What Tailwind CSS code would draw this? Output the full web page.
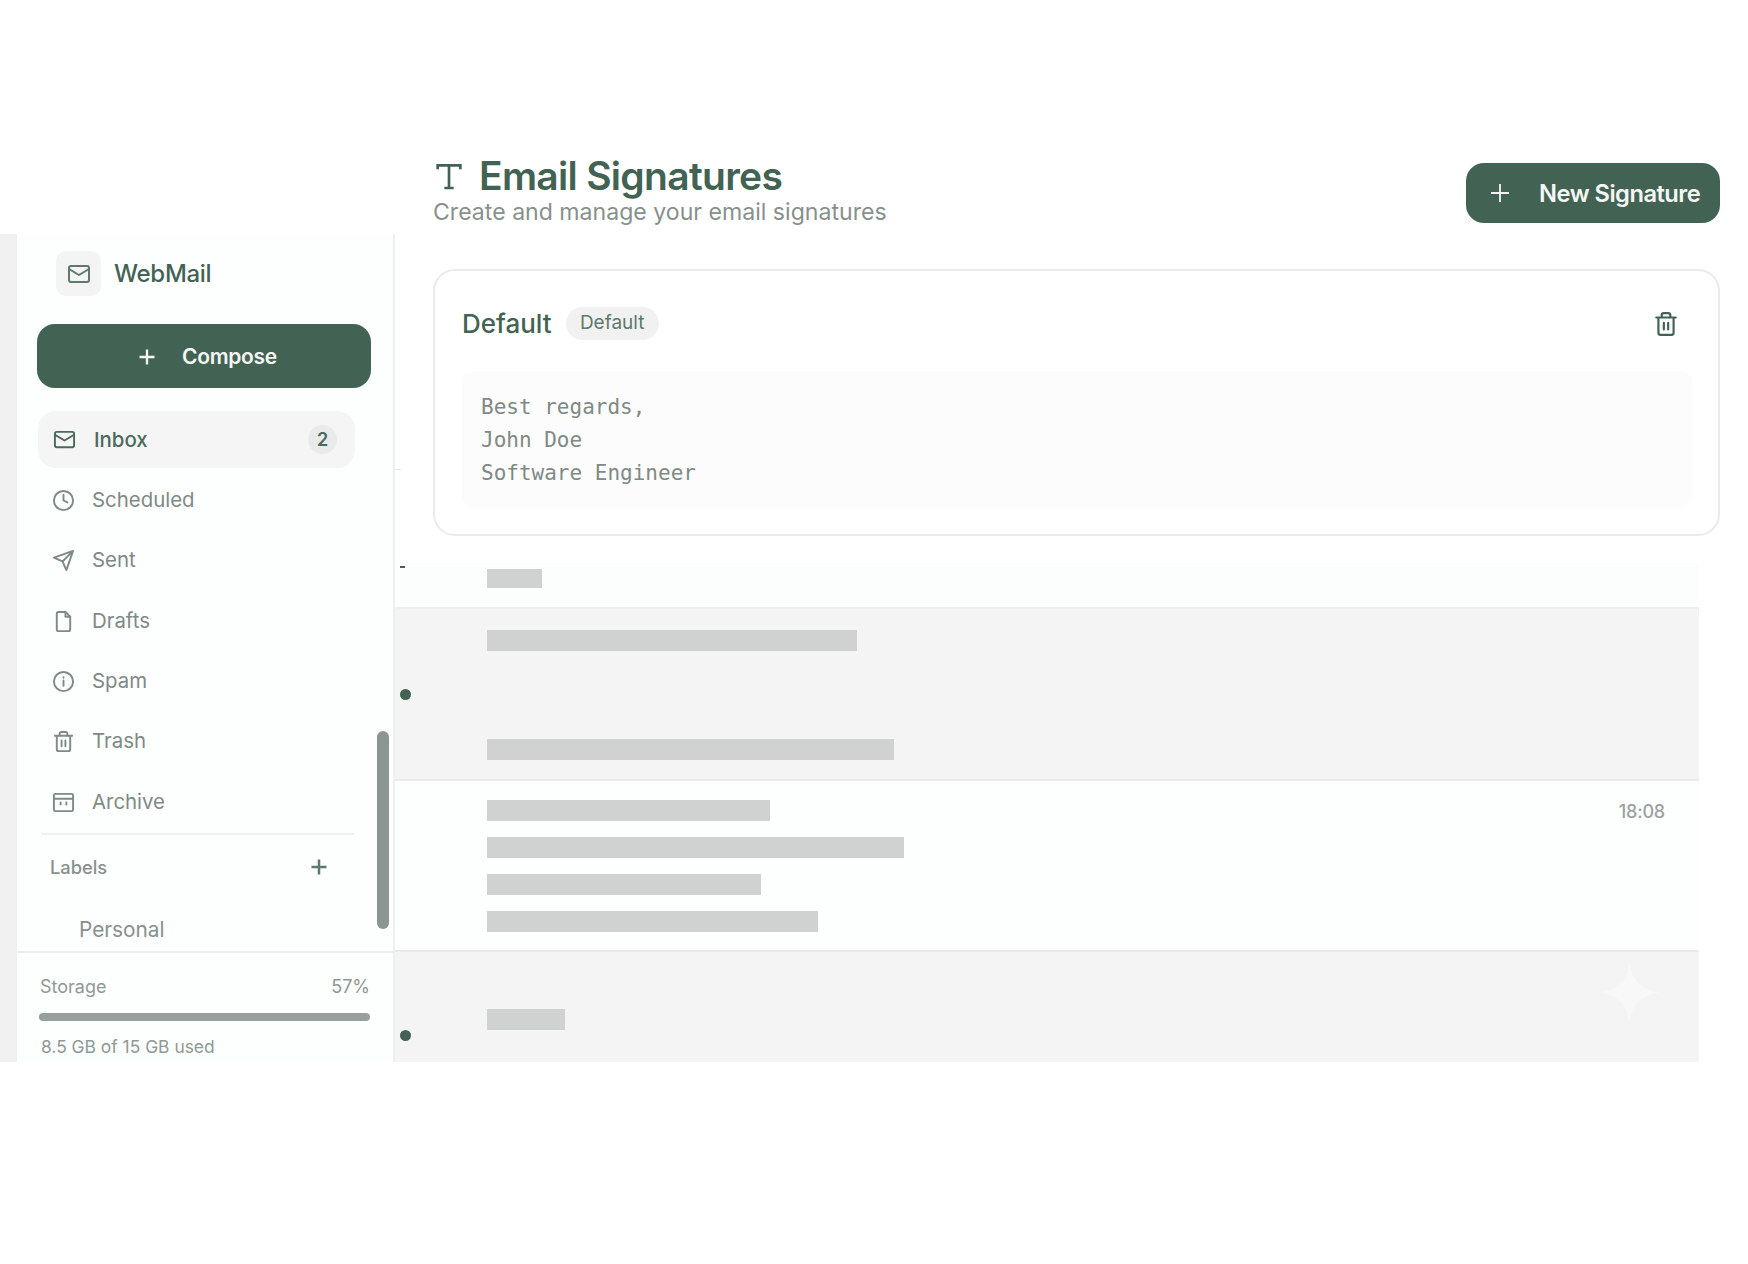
<!DOCTYPE html>
<html lang="en">
<head>
    <meta charset="UTF-8">
    <title>Email Signatures</title>
    <script src="https://cdn.jsdelivr.net/npm/@tailwindcss/browser@4"></script>
</head>
<body class="bg-white font-['Inter',sans-serif]">
    <div class="w-[1748px] h-[1264px] overflow-hidden">
        <!-- Page header -->
        <header class="flex justify-between items-start h-[234px] pt-[163px] pl-[433px] pr-[28px]">
            <div class="-mt-[9px]">
                <div class="flex items-center gap-[14px] h-[44px]">
                    <svg class="w-[32px] h-[32px] text-[#426353]" viewBox="0 0 24 24" fill="none" stroke="currentColor" stroke-width="2"><path d="M3.5 7V4h17v3M8.5 21h7M12 4v17"/></svg>
                    <h1 class="text-[39px] leading-[44px] font-semibold tracking-[-0.7px] text-[#426353]">Email Signatures</h1>
                </div>
                <p class="text-[23.1px] leading-[28px] text-[#87918c]">Create and manage your email signatures</p>
            </div>
            <button class="flex items-center w-[254px] h-[60px] pl-[22px] bg-[#426353] rounded-[18px] text-[#f4f6f5]">
                <svg class="w-[24px] h-[24px]" viewBox="0 0 24 24" fill="none" stroke="currentColor" stroke-width="1.8"><path d="M3 12h18M12 3v18"/></svg>
                <span class="ml-[27px] pt-[2px] text-[23.7px] font-semibold tracking-[-0.5px]">New Signature</span>
            </button>
        </header>

        <div class="flex h-[828px]">
            <div class="w-[16px] bg-[#f0f1f0]"></div>

            <!-- Sidebar -->
            <aside class="relative flex flex-col w-[379px] border-l border-r-2 border-[#eeefee] bg-[#fdfefe]">
                <div class="flex items-center gap-[13px] ml-[39px] mt-[17px]">
                    <div class="flex items-center justify-center w-[45px] h-[45px] rounded-[10px] bg-[#f3f4f3]">
                        <svg class="w-[24px] h-[24px] text-[#5d7a6c]" viewBox="0 0 24 24" fill="none" stroke="currentColor" stroke-width="2" stroke-linejoin="round"><rect x="2" y="4" width="20" height="16" rx="2"/><path d="m22 7-10 6L2 7"/></svg>
                    </div>
                    <span class="text-[24px] font-medium tracking-[-0.3px] text-[#426353]">WebMail</span>
                </div>
                <button class="flex items-center justify-center gap-[25px] ml-[20px] w-[334px] pl-[6px] pt-[2px] mt-[28px] h-[64px] rounded-[18px] bg-[#426353] text-[#f4f6f5]">
                    <svg class="w-[20px] h-[20px]" viewBox="0 0 24 24" fill="none" stroke="currentColor" stroke-width="2.8"><path d="M3 12h18M12 3v18"/></svg>
                    <span class="text-[21px] font-semibold tracking-[-0.3px]">Compose</span>
                </button>

                <nav class="flex flex-col gap-[4.35px] mt-[23px] ml-[21px] w-[317px] text-[20.4px] text-[#7f8a85]">
                    <a class="flex items-center h-[57px] pl-[15px] pr-[18px] rounded-[18px] bg-[#f4f5f4] text-[#4a6a5b] font-medium">
                        <svg class="w-[23px] h-[23px] mr-[18px]" viewBox="0 0 24 24" fill="none" stroke="currentColor" stroke-width="2" stroke-linejoin="round"><rect x="2" y="4" width="20" height="16" rx="2"/><path d="m22 7-10 6L2 7"/></svg>
                        <span class="flex-1 pt-[2px]">Inbox</span>
                        <span class="flex items-center justify-center w-[29px] h-[29px] rounded-full bg-[#e9ebea] text-[18px] font-semibold">2</span>
                    </a>
                    <a class="flex items-center h-[56px] pl-[14px]">
                        <svg class="w-[23px] h-[23px] mr-[17px]" viewBox="0 0 24 24" fill="none" stroke="currentColor" stroke-width="2" stroke-linecap="round" stroke-linejoin="round"><circle cx="12" cy="12" r="10"/><path d="M12 6v6l4 2"/></svg>
                        Scheduled
                    </a>
                    <a class="flex items-center h-[56px] pl-[14px]">
                        <svg class="w-[23px] h-[23px] mr-[17px]" viewBox="0 0 24 24" fill="none" stroke="currentColor" stroke-width="2" stroke-linecap="round" stroke-linejoin="round"><path d="M22 2 11 13M22 2l-7 20-4-9-9-4z"/></svg>
                        Sent
                    </a>
                    <a class="flex items-center h-[56px] pl-[14px]">
                        <svg class="w-[23px] h-[23px] mr-[17px]" viewBox="0 0 24 24" fill="none" stroke="currentColor" stroke-width="2" stroke-linecap="round" stroke-linejoin="round"><path d="M14 2H7a2 2 0 0 0-2 2v16a2 2 0 0 0 2 2h10a2 2 0 0 0 2-2V7z"/><path d="M14 2v5h5"/></svg>
                        Drafts
                    </a>
                    <a class="flex items-center h-[56px] pl-[14px]">
                        <svg class="w-[23px] h-[23px] mr-[17px]" viewBox="0 0 24 24" fill="none" stroke="currentColor" stroke-width="2" stroke-linecap="round" stroke-linejoin="round"><circle cx="12" cy="12" r="10"/><path d="M12 7.5v.5M12 11v5.5"/></svg>
                        Spam
                    </a>
                    <a class="flex items-center h-[56px] pl-[14px]">
                        <svg class="w-[23px] h-[23px] mr-[17px]" viewBox="0 0 24 24" fill="none" stroke="currentColor" stroke-width="2" stroke-linecap="round" stroke-linejoin="round"><path d="M3 6h18M19 6v14a2 2 0 0 1-2 2H7a2 2 0 0 1-2-2V6M8 6V4a2 2 0 0 1 2-2h4a2 2 0 0 1 2 2v2M10 11v6M14 11v6"/></svg>
                        Trash
                    </a>
                    <a class="flex items-center h-[56px] pl-[14px]">
                        <svg class="w-[23px] h-[23px] mr-[17px]" viewBox="0 0 24 24" fill="none" stroke="currentColor" stroke-width="2" stroke-linecap="round" stroke-linejoin="round"><rect x="2" y="3" width="20" height="18" rx="1.5"/><path d="M2 8h20M9 12v2M15 12v2"/></svg>
                        Archive
                    </a>
                </nav>

                <div class="mt-[3px] ml-[24px] w-[313px] border-t-2 border-[#eff0ef]"></div>
                <div class="flex items-center justify-between mt-[19px] ml-[33px] w-[279px] h-[27px] text-[18.3px] font-medium text-[#87918c]">
                    Labels
                    <svg class="-mt-[2px] w-[20px] h-[20px] text-[#5d7a6c]" viewBox="0 0 24 24" fill="none" stroke="currentColor" stroke-width="3"><path d="M3 12h18M12 3v18"/></svg>
                </div>
                <div class="mt-[35px] ml-[62px] h-[28px] text-[20.8px] leading-[28px] text-[#87918c]">Personal</div>

                <div class="mt-auto h-[111px] border-t-2 border-[#eeefee] pt-[21px] px-[22px]">
                    <div class="flex justify-between ml-[1px] mr-[1px] text-[18px] leading-[26px] text-[#8f9995]">
                        <span>Storage</span>
                        <span>57%</span>
                    </div>
                    <div class="mt-[13px] mr-[1px] h-[8px] rounded-full bg-[#97a09c]"></div>
                    <div class="mt-[13px] ml-[2px] text-[17.4px] leading-[26px] text-[#8f9995]">8.5 GB of 15 GB used</div>
                </div>

                <!-- scrollbar thumb, overlays the nav -->
                <div class="absolute left-[360px] top-[497px] w-[12px] h-[198px] rounded-full bg-[#8b9591]"></div>
            </aside>

            <!-- Main column -->
            <main class="relative flex-1 flex flex-col">
                <section class="mt-[35px] ml-[38px] mr-[28px] h-[268px] rounded-[22px] border-2 border-[#e9ebea] bg-white px-[27px]">
                    <div class="flex items-center h-[100px] pt-[5px]">
                        <h2 class="text-[26px] font-medium text-[#426353]">Default</h2>
                        <span class="flex items-center justify-center ml-[14px] w-[93px] h-[33px] rounded-full bg-[#f0f1f0] text-[19px] text-[#5d7a6c]">Default</span>
                        <svg class="ml-auto mr-[12px] w-[26px] h-[26px] text-[#426353]" viewBox="0 0 24 24" fill="none" stroke="currentColor" stroke-width="2" stroke-linecap="round" stroke-linejoin="round"><path d="M3 6h18M19 6v14a2 2 0 0 1-2 2H7a2 2 0 0 1-2-2V6M8 6V4a2 2 0 0 1 2-2h4a2 2 0 0 1 2 2v2M10 11v6M14 11v6"/></svg>
                    </div>
                    <div class="h-[137px] -mr-[1px] rounded-[12px] bg-[#fbfcfb] px-[19px] pt-[20px] font-['DejaVu_Sans_Mono',monospace] text-[21px] leading-[33px] text-[#7f8a85]">
                        <div>Best regards,</div>
                        <div>John Doe</div>
                        <div>Software Engineer</div>
                    </div>
                </section>

                <div class="flex flex-col w-[1304px] mt-[27px]">
                    <div class="h-[46px] pl-[92px] pt-[6px] bg-[#fcfdfd] border-b-2 border-[#eeefee]">
                        <div class="w-[55px] h-[19px] bg-[#d0d2d1]"></div>
                    </div>
                    <div class="relative h-[172px] pl-[92px] pt-[21px] bg-[#f4f4f4] border-b-2 border-[#e9ebea]">
                        <div class="w-[370px] h-[21px] bg-[#d0d2d1]"></div>
                        <div class="w-[407px] h-[21px] mt-[88px] bg-[#d0d2d1]"></div>
                        <div class="absolute left-[5px] top-[80px] w-[11px] h-[11px] rounded-full bg-[#426353]"></div>
                    </div>
                    <div class="relative h-[171px] pl-[92px] pt-[19px] bg-[#fdfefe] border-b-2 border-[#e9ebea]">
                        <div class="w-[283px] h-[21px] bg-[#d0d2d1]"></div>
                        <div class="w-[417px] h-[21px] mt-[16px] bg-[#d0d2d1]"></div>
                        <div class="w-[274px] h-[21px] mt-[16px] bg-[#d0d2d1]"></div>
                        <div class="w-[331px] h-[21px] mt-[16px] bg-[#d0d2d1]"></div>
                        <div class="absolute right-[34px] top-[20px] text-[18px] font-medium leading-[22px] text-[#9aa2a0] tracking-[-0.2px]">18:08</div>
                    </div>
                    <div class="relative h-[110px] pl-[92px] pt-[57px] bg-[#f4f4f4]">
                        <div class="w-[78px] h-[21px] bg-[#d0d2d1]"></div>
                        <div class="absolute left-[5px] top-[78px] w-[11px] h-[11px] rounded-full bg-[#426353]"></div>
                        <svg class="absolute left-[1204px] top-[10px] w-[61px] h-[61px] text-[#f8f8f8]" viewBox="0 0 60 60" fill="currentColor"><path d="M30 0C32 18 42 28 60 30 42 32 32 42 30 60 28 42 18 32 0 30 18 28 28 18 30 0z"/></svg>
                    </div>
                </div>

                <!-- stray ticks at the column edge -->
                <div class="absolute left-[5px] top-[332px] w-[5px] h-[2px] bg-[#426353]"></div>
                <div class="absolute left-0 top-[235px] w-[6px] h-[1px] bg-[#e9ebea]"></div>
            </main>
        </div>
    </div>
</body>
</html>
